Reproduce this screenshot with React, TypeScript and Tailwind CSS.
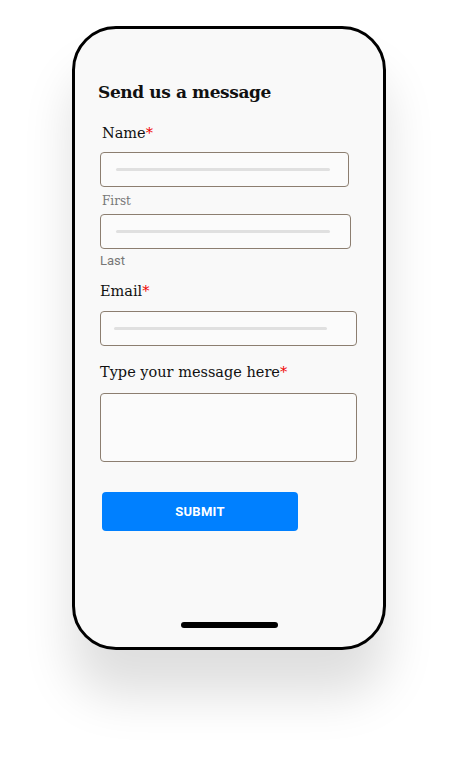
export default function App() {
  const serif = { fontFamily: '"DejaVu Serif", "Liberation Serif", serif' }
  return (
    <div className="min-h-[768px] w-full bg-white pt-[26px]">
      <div
        className="mx-auto flex h-[624px] w-[314px] flex-col rounded-[44px] border-[3px] border-black bg-[#f9f9f9] pl-[23px] pt-[50px] shadow-[0_45px_50px_rgba(0,0,0,0.13)]"
        style={serif}
      >
        <h1 className="text-[17px] font-bold leading-[26px] tracking-[-0.4px] text-[#111]">Send us a message</h1>

        <label className="ml-[4px] mt-[18px] text-[14.5px] leading-[20px] text-[#111]">
          Name<span className="text-[#f00000]">*</span>
        </label>
        <div className="ml-[2px] mt-[9px] flex h-[35px] w-[249px] items-center rounded-[4px] border border-[#8c7e70] bg-[#fbfbfb] px-[15px]">
          <div className="h-[3px] w-[214px] rounded-full bg-[#e0e0e0]" />
        </div>
        <span className="ml-[4px] mt-[6px] text-[12px] leading-[16px] text-[#777]">First</span>
        <div className="ml-[2px] mt-[5px] flex h-[35px] w-[251px] items-center rounded-[4px] border border-[#8c7e70] bg-[#fbfbfb] px-[15px]">
          <div className="h-[3px] w-[214px] rounded-full bg-[#e0e0e0]" />
        </div>
        <span
          className="ml-[2px] mt-[4px] text-[13px] leading-[16px] text-[#777]"
          style={{ fontFamily: 'Roboto, "Liberation Sans", sans-serif' }}
        >
          Last
        </span>

        <label className="ml-[2px] mt-[12px] text-[14.5px] leading-[20px] text-[#111]">
          Email<span className="text-[#f00000]">*</span>
        </label>
        <div className="ml-[2px] mt-[10px] flex h-[35px] w-[257px] items-center rounded-[4px] border border-[#8c7e70] bg-[#fbfbfb] px-[13px]">
          <div className="h-[3px] w-[213px] rounded-full bg-[#e0e0e0]" />
        </div>

        <label className="ml-[2px] mt-[16px] text-[14.5px] leading-[20px] text-[#111]">
          Type your message here<span className="text-[#f00000]">*</span>
        </label>
        <div className="ml-[2px] mt-[11px] h-[69px] w-[257px] rounded-[4px] border border-[#8c7e70] bg-[#fbfbfb]" />

        <button
          className="ml-[4px] mt-[30px] h-[39px] w-[196px] rounded-[4px] bg-[#0080ff] text-[13px] font-bold tracking-[0.3px] text-white"
          style={{ fontFamily: 'Roboto, "Liberation Sans", sans-serif' }}
        >
          SUBMIT
        </button>

        <div className="mb-[19px] mt-auto ml-[83px] h-[6px] w-[97px] rounded-full bg-black" />
      </div>
    </div>
  )
}
